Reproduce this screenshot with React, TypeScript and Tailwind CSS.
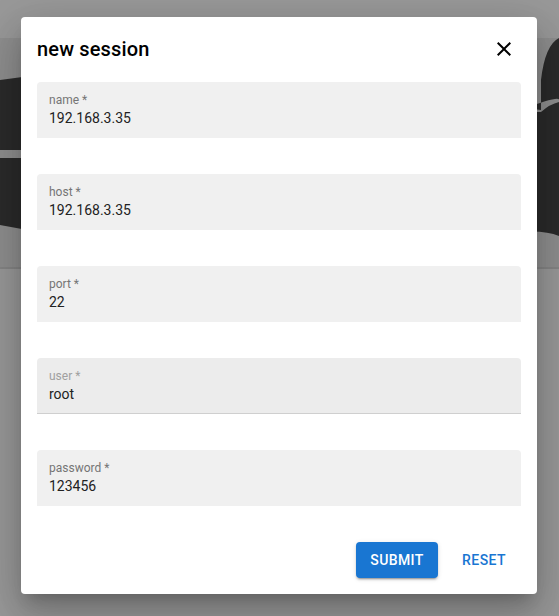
import React from "react";

const fields = [
  { label: "name *", value: "192.168.3.35" },
  { label: "host *", value: "192.168.3.35" },
  { label: "port *", value: "22" },
  { label: "user *", value: "root", hover: true },
  { label: "password *", value: "123456" },
];

function Background() {
  return (
    <svg
      className="absolute inset-0"
      width="559"
      height="616"
      viewBox="0 0 559 616"
    >
      <rect x="0" y="0" width="559" height="616" fill="#999999" />
      <rect x="0" y="38" width="559" height="230" fill="#8f8f8f" />
      <path d="M0 80 L60 72 L60 236 L0 225 Z" fill="#2b2b2b" />
      <rect x="0" y="150" width="60" height="8" fill="#8f8f8f" />
      <path
        d="M520 236 L520 110 Q560 95 559 100 L559 38 Q545 45 541 80 L541 110 Q530 108 520 112 Z"
        fill="#2b2b2b"
      />
      <path d="M541 112 Q550 104 559 102 L559 236 Q545 230 520 232 L520 112 Z" fill="#2b2b2b" />
      <rect x="0" y="267" width="559" height="2" fill="#858585" />
    </svg>
  );
}

export default function App() {
  return (
    <div
      className="relative w-[559px] h-[616px] overflow-hidden"
      style={{ fontFamily: "Roboto, 'Liberation Sans', sans-serif" }}
    >
      <Background />
      <div className="absolute left-[21px] top-[17px] w-[516px] h-[577px] bg-white rounded-[4px] shadow-[0_11px_15px_-7px_rgba(0,0,0,0.2),0_24px_38px_3px_rgba(0,0,0,0.14),0_9px_46px_8px_rgba(0,0,0,0.12)] flex flex-col">
        <div className="flex items-center justify-between pl-4 pr-[21px] pt-4">
          <div className="text-[20px] font-medium leading-[32px] text-black tracking-[0.0075em]">
            new session
          </div>
          <svg width="24" height="24" viewBox="0 0 24 24">
            <path
              d="M19 6.41 17.59 5 12 10.59 6.41 5 5 6.41 10.59 12 5 17.59 6.41 19 12 13.41 17.59 19 19 17.59 13.41 12z"
              fill="#000"
            />
          </svg>
        </div>
        <div className="flex flex-col gap-[36px] px-4 mt-[17px]">
          {fields.map((f) => (
            <div
              key={f.label}
              className={
                f.hover
                  ? "h-[56px] rounded-t-[4px] bg-[#ececec] border-b border-[#cfcfcf] px-3 pt-[10px]"
                  : "h-[56px] rounded-t-[4px] bg-[#f0f0f0] px-3 pt-[10px]"
              }
            >
              <div
                className={
                  f.hover
                    ? "text-[12px] leading-[16px] text-[#a0a0a0]"
                    : "text-[12px] leading-[16px] text-[#757575]"
                }
              >
                {f.label}
              </div>
              <div className="text-[14px] leading-[19px] mt-[1px] text-[#222222]">
                {f.value}
              </div>
            </div>
          ))}
        </div>
        <div className="flex justify-end items-center gap-[14px] pr-[21px] mt-[36px]">
          <div className="h-[36px] w-[82px] flex items-center justify-center rounded-[4px] bg-[#1976d2] text-white text-[14px] font-medium tracking-[0.02857em] shadow-[0_3px_1px_-2px_rgba(0,0,0,0.2),0_2px_2px_0_rgba(0,0,0,0.14),0_1px_5px_0_rgba(0,0,0,0.12)]">
            SUBMIT
          </div>
          <div className="h-[36px] w-[64px] flex items-center justify-center text-[#1976d2] text-[14px] font-medium tracking-[0.02857em]">
            RESET
          </div>
        </div>
      </div>
    </div>
  );
}
